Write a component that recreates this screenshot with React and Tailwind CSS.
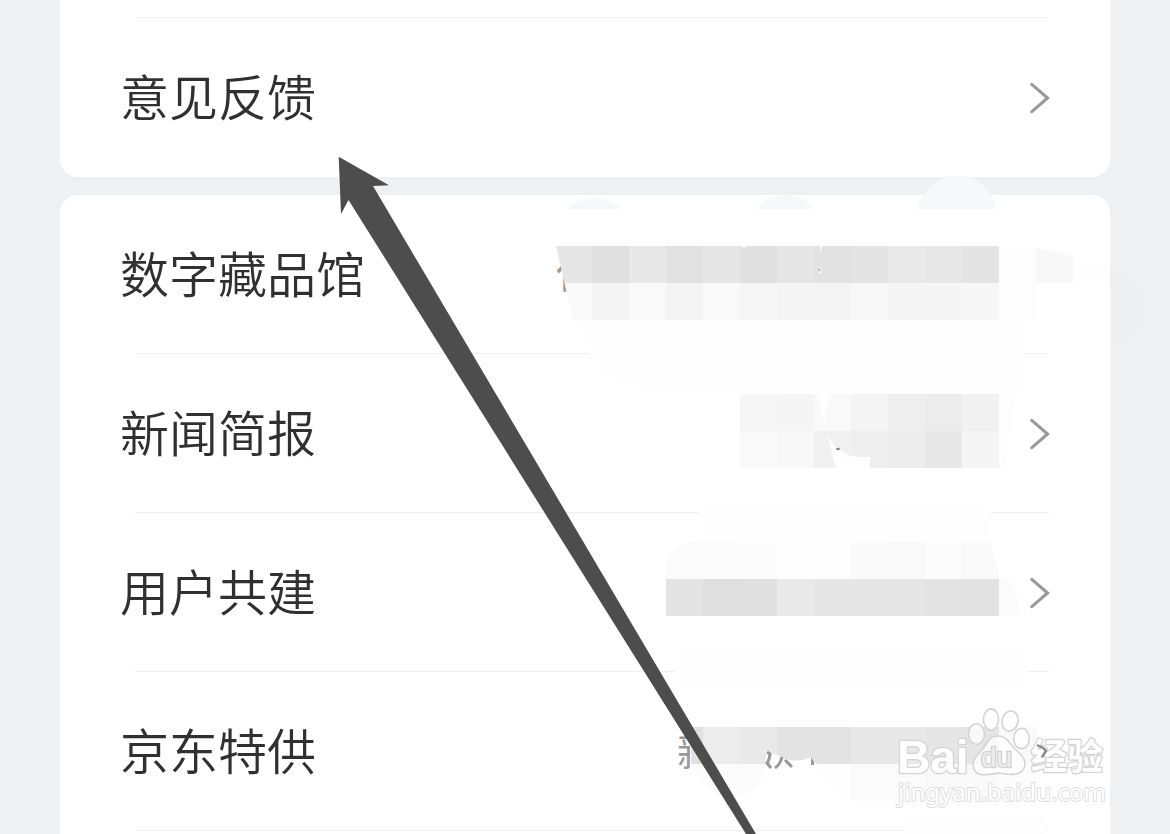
const services = ['数字藏品馆', '新闻简报', '用户共建', '京东特供'];

// Each strip: top edge, left edge of its first cell, grey level of each cell.
const CELL = 37;
const mosaic = [
  { clip: 'maskA', y: 246, x: 555, shades: ['e6', 'e0', 'e8', 'e1', 'e6', 'e0', 'e5', 'e2', 'e4', 'e9', 'e7', 'e4', 'fd', 'f8', 'fe'] },
  { clip: 'maskA', y: 283, x: 555, shades: ['f9', 'f4', 'f9', 'f4', 'f9', 'f6', 'f4', 'f4', 'f8', 'f5', 'f5', 'f7', 'fd'] },
  { clip: 'maskB', y: 394, x: 740, shades: ['f6', 'f5', 'f9', 'f4', 'ee', 'ec', 'f1', 'fd'] },
  { clip: 'maskB', y: 431, x: 740, shades: ['fa', 'f8', 'f0', 'ee', 'ed', 'e8', 'f5', 'fd'] },
  { clip: 'maskC', y: 542, x: 666, shades: ['fb', 'fb', 'fc', 'fd', 'fd', 'fa', 'f9', 'fc', 'fa'] },
  { clip: 'maskC', y: 579, x: 666, shades: ['e4', 'df', 'e0', 'e9', 'e6', 'e6', 'e6', 'e3', 'e2', 'fb'] },
  { clip: 'maskD', y: 727, x: 666, shades: ['e1', 'ec', 'e9', 'e3', 'e3', 'e8', 'e8', 'e6', 'e5', 'f9', 'fd'] },
  { clip: 'maskD', y: 764, x: 666, shades: ['fb', 'fb', 'fb', 'fe', 'fd', 'fb', 'fb', 'f9', 'f9', 'fc'] },
];

function Chevron() {
  return (
    <svg className="mt-0.5 h-8 w-5 shrink-0" viewBox="0 0 20 32" fill="none" aria-hidden="true">
      <path d="M1.8 2.3 17.600 16 1.8 29.7" stroke="#999" strokeWidth="3.1" strokeLinecap="round" />
    </svg>
  );
}

function Row({ label, chevron = true }) {
  return (
    <button type="button" className="flex h-[158px] w-full items-center justify-between px-[60px] text-left">
      <span className="pb-1 text-[49px] leading-[60px] font-[350] text-[#303030]">{label}</span>
      {chevron && <Chevron />}
    </button>
  );
}

function Divider() {
  return <div className="mr-[61px] ml-[75px] h-px bg-[#efefef]" />;
}

function Redactions() {
  return (
    <svg className="pointer-events-none absolute top-0 right-0" width="1170" height="834" viewBox="0 0 1170 834" aria-hidden="true">
      <defs>
        <clipPath id="maskA">
          <path d="M556 246H1030Q1075 256 1110 267V320H573Z" />
        </clipPath>
        <clipPath id="maskB">
          <path d="M740 394H1016L1005 468H740Z" />
        </clipPath>
        <clipPath id="maskC">
          <path d="M666 560Q674 543 696 542H990L997 567Q1019 584 1019 616H666Z" />
        </clipPath>
        <clipPath id="maskD">
          <path d="M691 727H1036Q1042 742 1042 764H1036V801H999V812H895Q872 817 852 807C835 796 828 777 815 764H766Q762 791 736 797Q706 799 691 764Z" />
        </clipPath>
        <clipPath id="valueA">
          <path d="M550 240H555L569 300H550Z" />
        </clipPath>
        <clipPath id="valueD">
          <path d="M672 736H690V775H672Z" />
        </clipPath>
      </defs>

      <g fill="#f6f8fa">
        <path d="M567 209A38.6 38.6 0 0 1 621 209Z" />
        <path d="M756 209A37 37 0 0 1 814 209Z" />
        <path d="M918 209A39.5 39.5 0 0 1 996 209Z" />
      </g>
      <path d="M1110 267Q1146 272 1146 310Q1146 344 1110 345Z" fill="#ecf0f3" />

      <g fill="#fefefe">
        <path d="M573 320H1024V390H640Q598 382 588 350Z" />
        <path d="M699 505H990V542H699Z" />
        <path d="M675 650H1027V690H675Z" />
        <path d="M905 812H1046V834H905Z" />
      </g>

      <text x="555" y="288" fontSize="40" fill="#999" clipPath="url(#valueA)">化</text>
      <text x="677" y="766" fontSize="40" fill="#999" clipPath="url(#valueD)">新</text>

      {mosaic.map((strip) => (
        <g key={strip.y} clipPath={`url(#${strip.clip})`} shapeRendering="crispEdges">
          {strip.shades.map((shade, i) => (
            <rect key={i} x={strip.x + i * CELL} y={strip.y} width={CELL} height={CELL} fill={`#${shade}${shade}${shade}`} />
          ))}
        </g>
      ))}

      <g fill="#fefefe">
        <path d="M741 246H747L744 248Z" />
        <path d="M820 246H822L820 254Z" />
        <path d="M819 266L822 274L818 272Z" />
        <path d="M813 380L834 388Q824 405 826 431Q836 456 860 457H870V468H836Z" />
        <path d="M766 751Q778 755 785 759Q799 763 811 757L816 764H766Z" />
      </g>
      <g fill="none" stroke="#999" strokeWidth="3">
        <path d="M767 752L770 754Q769 762 766 764M767 763L771 768M782 757Q780 765 775 768M785 760L792 767" />
      </g>
      <path d="M811 757L814 762V765H811Z" fill="#999" />
      <path d="M818 268L820 270L819 272Z" fill="#888" />
      <ellipse cx="838" cy="449" rx="2" ry="1.3" fill="#888" />
    </svg>
  );
}

function Pointer() {
  return (
    <svg className="pointer-events-none absolute top-0 left-0" width="1170" height="834" viewBox="0 0 1170 834" aria-hidden="true">
      <path d="M338.700 156.700L389 185.300L373 186L756 834H746L348.500 200L341 214Z" fill="#4d4d4d" />
    </svg>
  );
}

function Watermark() {
  return (
    <svg className="pointer-events-none absolute top-0 right-0" width="1170" height="834" viewBox="0 0 1170 834" role="img" aria-label="Baidu 经验 jingyan.baidu.com">
      <g fill="#fff" stroke="#d4d4d4" strokeWidth="2.6" paintOrder="stroke" strokeLinejoin="round">
        <text x="897" y="773" fontSize="46" fontWeight="700" className="font-['Liberation_Sans',sans-serif]">Bai</text>
        <text x="1031" y="770" fontSize="36" fontWeight="700">经验</text>
        <text x="898" y="801" fontSize="24" strokeWidth="2" stroke="#dedede" className="font-['Noto_Sans',sans-serif]">jingyan.baidu.com</text>
      </g>
      <g fill="#fff" fillOpacity="0.75" stroke="#d4d4d4" strokeWidth="1.6">
        <ellipse cx="976.500" cy="734" rx="8" ry="10.300" />
        <ellipse cx="991" cy="719.500" rx="7.600" ry="10.600" />
        <ellipse cx="1010" cy="721" rx="8" ry="10.200" transform="rotate(12 1010 721)" />
        <ellipse cx="1021.500" cy="738.500" rx="7.800" ry="10.200" />
        <path d="M998 736C1008 736 1010 745 1016 750C1023 756 1027 761 1024 768C1021 776 1011 775 998 773C987 775 977 777 974 769C971 761 976 757 981 751C987 745 988 736 998 736Z" />
      </g>
      <text x="981" y="767" fontSize="28" fill="#eee" stroke="#d0d0d0" strokeWidth="2.6" paintOrder="stroke" className="font-['Liberation_Sans',sans-serif]">du</text>
      <path d="M1037 745L1043 748L1046 751L1042 757" fill="none" stroke="#888" strokeWidth="2.4" />
    </svg>
  );
}

export default function App() {
  return (
    <main className="relative flex min-h-screen flex-col overflow-hidden bg-[#edf1f4] px-[60px] font-['Noto_Sans_CJK_SC',sans-serif]">
      <section className="rounded-b-[18px] bg-white pt-[17px] pb-px">
        <Divider />
        <Row label="意见反馈" />
      </section>

      <ul className="mt-[18px] flex-1 rounded-t-[18px] bg-white">
        {services.map((label, i) => (
          <li key={label}>
            <Row label={label} chevron={i === 1 || i === 2} />
            <Divider />
          </li>
        ))}
      </ul>

      <Redactions />
      <Pointer />
      <Watermark />
    </main>
  );
}
